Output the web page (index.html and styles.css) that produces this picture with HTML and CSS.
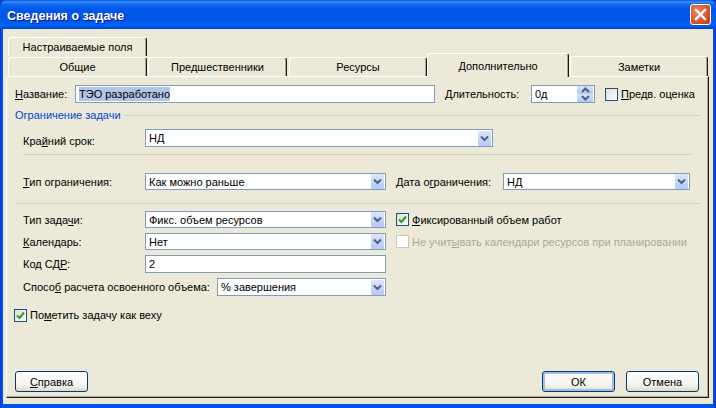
FILE: index.html
```html
<!DOCTYPE html>
<html lang="ru">
<head>
    <meta charset="UTF-8">
    <title>Сведения о задаче</title>
    <link rel="stylesheet" href="styles.css">
</head>
<body>
    <div class="window">
        <div class="titlebar">
            <span class="title">Сведения о задаче</span>
            <button class="close-btn">
                <svg width="13" height="13" viewBox="0 0 13 13"><path d="M2 2 L11 11 M11 2 L2 11" stroke="#fff" stroke-width="2.4" stroke-linecap="square" fill="none"/></svg>
            </button>
        </div>
        <div class="client">
            <div class="tab-row">
                <div class="tab tab-wide">Настраиваемые поля</div>
            </div>
            <div class="tab-row tab-row-main">
                <div class="tab tab-a">Общие</div>
                <div class="tab tab-b">Предшественники</div>
                <div class="tab tab-c">Ресурсы</div>
                <div class="tab tab-active">Дополнительно</div>
                <div class="tab tab-d">Заметки</div>
            </div>
            <div class="panel">
                <div class="row row-name">
                    <label class="lbl-name"><u>Н</u>азвание:</label>
                    <div class="field field-name"><span class="selected">ТЭО разработано</span></div>
                    <label class="lbl-duration"><u>Д</u>лительность:</label>
                    <div class="field field-spin">
                        <span>0д</span>
                        <div class="spin">
                            <div class="spin-btn"><svg width="9" height="6" viewBox="0 0 9 6"><path d="M1 5 L4.5 1.5 L8 5" stroke="#4d6185" stroke-width="2" fill="none"/></svg></div>
                            <div class="spin-btn"><svg width="9" height="6" viewBox="0 0 9 6"><path d="M1 1 L4.5 4.5 L8 1" stroke="#4d6185" stroke-width="2" fill="none"/></svg></div>
                        </div>
                    </div>
                    <div class="check"></div>
                    <label class="check-lbl"><u>П</u>редв. оценка</label>
                </div>

                <div class="legend"><span>Ограничение задачи</span><div class="legend-line"></div></div>

                <div class="row row-deadline">
                    <label class="lbl lbl-deadline">Кра<u>й</u>ний срок:</label>
                    <div class="field field-deadline"><span>НД</span>
                        <div class="arrow"><svg width="9" height="7" viewBox="0 0 9 7"><path d="M1 1.5 L4.5 5 L8 1.5" stroke="#4d6185" stroke-width="2" fill="none"/></svg></div>
                    </div>
                </div>
                <div class="sep sep-short"></div>

                <div class="row row-constraint">
                    <label class="lbl"><u>Т</u>ип ограничения:</label>
                    <div class="field field-main"><span>Как можно раньше</span>
                        <div class="arrow"><svg width="9" height="7" viewBox="0 0 9 7"><path d="M1 1.5 L4.5 5 L8 1.5" stroke="#4d6185" stroke-width="2" fill="none"/></svg></div>
                    </div>
                    <label class="lbl-date">Дата о<u>г</u>раничения:</label>
                    <div class="field field-date"><span>НД</span>
                        <div class="arrow"><svg width="9" height="7" viewBox="0 0 9 7"><path d="M1 1.5 L4.5 5 L8 1.5" stroke="#4d6185" stroke-width="2" fill="none"/></svg></div>
                    </div>
                </div>
                <div class="sep sep-long"></div>

                <div class="row row-type">
                    <label class="lbl">Тип зада<u>ч</u>и:</label>
                    <div class="field field-main"><span>Фикс. объем ресурсов</span>
                        <div class="arrow"><svg width="9" height="7" viewBox="0 0 9 7"><path d="M1 1.5 L4.5 5 L8 1.5" stroke="#4d6185" stroke-width="2" fill="none"/></svg></div>
                    </div>
                    <div class="check check-on check-side">
                        <svg width="9" height="9" viewBox="0 0 9 9"><path d="M1 4.5 L3.5 7 L8 1.5" stroke="#21a121" stroke-width="2" fill="none"/></svg>
                    </div>
                    <label class="check-lbl"><u>Ф</u>иксированный объем работ</label>
                </div>
                <div class="row row-calendar">
                    <label class="lbl"><u>К</u>алендарь:</label>
                    <div class="field field-main"><span>Нет</span>
                        <div class="arrow"><svg width="9" height="7" viewBox="0 0 9 7"><path d="M1 1.5 L4.5 5 L8 1.5" stroke="#4d6185" stroke-width="2" fill="none"/></svg></div>
                    </div>
                    <div class="check check-off check-side"></div>
                    <label class="check-lbl disabled">Не учит<u>ы</u>вать календари ресурсов при планировании</label>
                </div>
                <div class="row row-wbs">
                    <label class="lbl">Код СД<u>Р</u>:</label>
                    <div class="field field-main field-tall"><span>2</span></div>
                </div>
                <div class="row row-earned">
                    <label class="lbl-earned">Спосо<u>б</u> расчета освоенного объема:</label>
                    <div class="field field-earned field-tall"><span>% завершения</span>
                        <div class="arrow"><svg width="9" height="7" viewBox="0 0 9 7"><path d="M1 1.5 L4.5 5 L8 1.5" stroke="#4d6185" stroke-width="2" fill="none"/></svg></div>
                    </div>
                </div>
                <div class="row row-milestone">
                    <div class="check check-on">
                        <svg width="9" height="9" viewBox="0 0 9 9"><path d="M1 4.5 L3.5 7 L8 1.5" stroke="#21a121" stroke-width="2" fill="none"/></svg>
                    </div>
                    <label class="check-lbl">По<u>м</u>етить задачу как веху</label>
                </div>

                <div class="buttons">
                    <button class="btn"><u>С</u>правка</button>
                    <div class="spacer"></div>
                    <button class="btn btn-default">ОК</button>
                    <button class="btn btn-cancel">Отмена</button>
                </div>
            </div>
        </div>
    </div>
</body>
</html>
```

FILE: styles.css
```css
html, body {
    margin: 0;
    padding: 0;
    background: #0a3cd8;
}
body {
    width: 716px;
    height: 408px;
    overflow: hidden;
    font-family: "Liberation Sans", Arial, sans-serif;
    font-size: 11px;
    color: #000;
}
.window {
    width: 716px;
    height: 408px;
    display: flex;
    flex-direction: column;
    background: linear-gradient(90deg, #0831d9 0, #0055e5 2px, #0055e5 713px, #0831d9 716px);
    border-radius: 7px 7px 0 0;
}
.titlebar {
    height: 29px;
    flex: none;
    display: flex;
    align-items: center;
    justify-content: space-between;
    padding: 0 5px 0 7px;
    border-radius: 7px 7px 0 0;
    background: linear-gradient(180deg, #0a57d6 0, #3c8efb 2px, #0f6af0 4px, #0057e7 9px, #0058ea 20px, #0064f8 25px, #0055e0 27px, #0043cf 29px);
}
.title {
    padding-top: 3px;
    color: #fff;
    font-family: "Liberation Sans", Arial, sans-serif;
    font-weight: bold;
    font-size: 12.5px;
    text-shadow: 1px 1px 1px #0f1089;
}
.close-btn {
    width: 21px;
    height: 21px;
    padding: 0;
    display: flex;
    align-items: center;
    justify-content: center;
    border: 1px solid #fff;
    border-radius: 3px;
    background: radial-gradient(circle at 35% 35%, #e8866a, #d8532b 60%, #b93a15);
}
.client {
    flex: 1;
    margin: 0 3px 4px;
    padding: 8px 4px 6px 3px;
    background: #ece9d8;
    display: flex;
    flex-direction: column;
}
.tab-row {
    height: 19px;
    flex: none;
    display: flex;
    align-items: flex-end;
    padding-left: 2px;
}
.tab-row-main {
    height: 20px;
}
.tab {
    box-sizing: border-box;
    height: 19px;
    flex: none;
    display: flex;
    align-items: center;
    justify-content: center;
    background: #ece9d8;
    border-top: 1px solid #fff;
    border-left: 1px solid #fff;
    border-right: 1px solid #1c1c16;
    box-shadow: inset -1px 0 #aca899;
    border-radius: 3px 3px 0 0;
}
.tab-wide, .tab-a { width: 139px; }
.tab-b { width: 139px; margin-left: 1px; }
.tab-c { width: 138px; margin-left: 2px; }
.tab-d { width: 138px; margin-left: 1px; height: 20px; }
.tab-active {
    width: 142px;
    height: 24px;
    margin-bottom: -1px;
    position: relative;
    z-index: 1;
}
.panel {
    flex: 1;
    box-sizing: border-box;
    padding: 8px 8px 5px 8px;
    border-top: 1px solid #fff;
    border-left: 1px solid #fff;
    border-right: 1px solid #1c1c16;
    border-bottom: 1px solid #1c1c16;
    box-shadow: inset -1px -1px #aca899;
    display: flex;
    flex-direction: column;
}
.row {
    display: flex;
    align-items: center;
    flex: none;
    height: 18px;
}
label u {
    text-underline-offset: 1px;
}
.lbl-name { width: 60px; flex: none; }
.lbl-duration { width: 86px; margin-left: 10px; flex: none; }
.field {
    box-sizing: border-box;
    height: 17px;
    flex: none;
    display: flex;
    align-items: center;
    justify-content: space-between;
    padding: 0 1px 0 3px;
    background: #fff;
    border: 1px solid #7f9db9;
    line-height: 14px;
}
.field-tall, .row-name .field, .row-deadline .field { height: 18px; }
.field-name { width: 360px; }
.field-spin { width: 64px; }
.field-deadline { width: 348px; }
.field-main { width: 241px; }
.field-date { width: 187px; }
.field-earned { width: 169px; }
.selected { background: #b3c5e6; }
.spin {
    width: 16px;
    height: 16px;
    display: flex;
    flex-direction: column;
}
.spin-btn {
    height: 8px;
    display: flex;
    align-items: center;
    justify-content: center;
    background: linear-gradient(180deg, #d8e2fb, #b2c6f5);
    border-radius: 1px;
}
.arrow {
    width: 13px;
    height: 15px;
    display: flex;
    align-items: center;
    justify-content: center;
    background: linear-gradient(180deg, #dde6fc, #b4c8f6);
    border-radius: 1px;
}
.check {
    box-sizing: border-box;
    width: 13px;
    height: 13px;
    flex: none;
    display: flex;
    align-items: center;
    justify-content: center;
    margin-left: 10px;
    border: 1px solid #1c5180;
    background: linear-gradient(135deg, #dcdcd7, #fff);
}
.check-on {
    margin-left: -1px;
}
.check-side {
    margin-left: 10px;
}
.check-off {
    border-color: #cac8bb;
    background: #fff;
}
.check-lbl {
    margin-left: 3px;
}
.disabled {
    color: #aca899;
}
.legend {
    display: flex;
    align-items: center;
    flex: none;
    height: 14px;
    margin-top: 5px;
    color: #0046d5;
}
.legend-line {
    flex: 1;
    height: 1px;
    margin-left: 3px;
    background: #d0d0bf;
}
.row-deadline, .row-constraint, .row-type, .row-calendar, .row-wbs, .row-earned {
    padding-left: 8px;
}
.lbl {
    width: 122px;
    flex: none;
}
.lbl-deadline {
    padding-top: 6px;
}
.lbl-date {
    width: 107px;
    margin-left: 10px;
    flex: none;
}
.lbl-earned {
    width: 194px;
    flex: none;
}
.row-deadline { margin-top: 7px; }
.sep {
    height: 1px;
    flex: none;
    background: #d0d0bf;
}
.sep-short { margin: 7px 9px 0 8px; }
.row-constraint { margin-top: 18px; height: 17px; }
.sep-long { margin-top: 13px; }
.row-type { margin-top: 7px; height: 17px; }
.row-calendar { margin-top: 5px; height: 17px; }
.row-wbs { margin-top: 5px; }
.row-earned { margin-top: 5px; }
.row-milestone { margin-top: 10px; }
.buttons {
    display: flex;
    margin-top: auto;
    margin-right: 1px;
}
.spacer { flex: 1; }
.btn {
    box-sizing: border-box;
    width: 73px;
    height: 21px;
    padding: 0;
    font: inherit;
    color: #000;
    border: 1px solid #003c74;
    border-radius: 3px;
    background: linear-gradient(180deg, #fff, #f4f3ee 70%, #dcd8cc);
}
.btn-default {
    box-shadow: inset 0 0 0 2px #a6bce8;
}
.btn-cancel {
    margin-left: 11px;
}
```
